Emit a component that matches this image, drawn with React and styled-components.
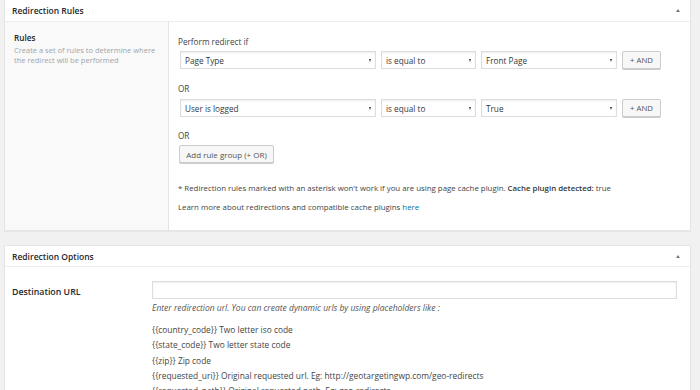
import React from "react";
import styled, { createGlobalStyle } from "styled-components";

const Global = createGlobalStyle`
  html, body { margin: 0; padding: 0; }
  body {
    background: #f1f1f1;
    font-family: "Open Sans", "Noto Sans", sans-serif;
    font-size: 8px;
    color: #444;
    width: 700px;
    height: 390px;
    overflow: hidden;
  }
  * { box-sizing: border-box; }
`;

const Page = styled.div`
  display: flex;
  flex-direction: column;
  gap: 14px;
  padding-left: 4px;
  width: 691px;
`;

const Panel = styled.section`
  background: #fff;
  border: 1px solid #e5e5e5;
  border-top: ${(p) => (p.$cut ? "none" : "1px solid #e5e5e5")};
  box-shadow: 0 1px 1px rgba(0, 0, 0, 0.04);
`;

const Header = styled.header`
  height: ${(p) => (p.$cut ? "22px" : "21px")};
  border-bottom: 1px solid #eee;
  display: flex;
  align-items: center;
  justify-content: space-between;
  padding: 0 10px 0 7px;
`;

const Title = styled.h2`
  margin: 0;
  font-size: 8.5px;
  font-weight: 600;
  color: #23282d;
`;

const Toggle = styled.span`
  width: 0;
  height: 0;
  border-left: 2.5px solid transparent;
  border-right: 2.5px solid transparent;
  border-bottom: 3px solid #72777c;
`;

const RulesBody = styled.div`
  display: grid;
  grid-template-columns: 164px 1fr;
  height: 208px;
`;

const Side = styled.div`
  background: #f9f9f9;
  border-right: 1px solid #e5e5e5;
  padding: 10px 9px;
`;

const SideTitle = styled.div`
  font-weight: 600;
  color: #23282d;
  font-size: 8.2px;
  margin-bottom: 2px;
`;

const SideDesc = styled.div`
  color: #a0a5aa;
  font-size: 7.5px;
  line-height: 10px;
`;

const Main = styled.div`
  padding: 15px 10px 0 9px;
  display: flex;
  flex-direction: column;
`;

const Label = styled.div`
  line-height: 10px;
  font-size: 8.2px;
  margin-bottom: ${(p) => p.$mb || 4}px;
  color: #444;
`;

const Row = styled.div`
  display: flex;
  align-items: center;
  padding-left: 2px;
  gap: 5px;
  margin-bottom: ${(p) => p.$mb || 0}px;
`;

const Select = styled.div`
  width: ${(p) => p.$w}px;
  height: 18px;
  border: 1px solid #ddd;
  box-shadow: inset 0 1px 2px rgba(0, 0, 0, 0.07);
  background: #fff;
  display: flex;
  align-items: center;
  justify-content: space-between;
  padding: 0 4px 0 4px;
  color: #32373c;
  font-size: 8.2px;
  &::after {
    content: "";
    width: 0;
    height: 0;
    border-left: 1.5px solid transparent;
    border-right: 1.5px solid transparent;
    border-top: 3px solid #32373c;
  }
`;

const Button = styled.button`
  font-family: inherit;
  font-size: ${(p) => p.$fs || 7.8}px;
  color: #555;
  background: #f7f7f7;
  border: 1px solid #ccc;
  border-radius: 2px;
  box-shadow: 0 1px 0 #ccc;
  height: 18px;
  padding: 0 ${(p) => p.$px || 6}px;
  margin: 0 0 0 ${(p) => p.$ml || 0}px;
  width: ${(p) => (p.$w ? p.$w + "px" : "auto")};
  align-self: flex-start;
`;

const Note = styled.p`
  margin: ${(p) => p.$mt || 0}px 0 ${(p) => p.$mb || 0}px;
  line-height: 10px;
  font-size: 7.85px;
  color: #444;
  white-space: nowrap;
  b { font-weight: 600; color: #32373c; }
  a { color: #0073aa; text-decoration: none; }
`;

const OptionsBody = styled.div`
  display: grid;
  grid-template-columns: 140px 1fr;
  padding: 14px 14px 0 7px;
  height: 140px;
`;

const FieldLabel = styled.div`
  font-weight: 600;
  color: #23282d;
  font-size: 8.8px;
  padding-top: 5px;
`;

const Field = styled.div`
  display: flex;
  flex-direction: column;
`;

const Input = styled.div`
  height: 18px;
  border: 1px solid #ddd;
  box-shadow: inset 0 1px 2px rgba(0, 0, 0, 0.07);
  background: #fff;
  width: 525px;
`;

const Help = styled.p`
  margin: 4px 0 9px;
  font-style: italic;
  font-size: 8.5px;
  color: #555;
  line-height: 10px;
  white-space: nowrap;
`;

const Placeholder = styled.div`
  font-size: 8.4px;
  color: #444;
  line-height: 15.3px;
  white-space: nowrap;
`;

export default function App() {
  const placeholders = [
    "{{country_code}} Two letter iso code",
    "{{state_code}} Two letter state code",
    "{{zip}} Zip code",
    "{{requested_uri}} Original requested url. Eg: http://geotargetingwp.com/geo-redirects",
    "{{requested_path}} Original requested path. Eg: geo-redirects",
  ];
  return (
    <>
      <Global />
      <Page>
        <Panel $cut>
          <Header $cut>
            <Title>Redirection Rules</Title>
            <Toggle />
          </Header>
          <RulesBody>
            <Side>
              <SideTitle>Rules</SideTitle>
              <SideDesc>
                Create a set of rules to determine where
                <br />
                the redirect will be performed
              </SideDesc>
            </Side>
            <Main>
              <Label $mb={4}>Perform redirect if</Label>
              <Row $mb={15}>
                <Select $w={196}>Page Type</Select>
                <Select $w={95}>is equal to</Select>
                <Select $w={136}>Front Page</Select>
                <Button $w={39} $px={0}>+ AND</Button>
              </Row>
              <Label $mb={5}>OR</Label>
              <Row $mb={14}>
                <Select $w={196}>User is logged</Select>
                <Select $w={95}>is equal to</Select>
                <Select $w={136}>True</Select>
                <Button $w={39} $px={0}>+ AND</Button>
              </Row>
              <Label $mb={4}>OR</Label>
              <Button $px={6} $ml={1} $w={95} $fs={8}>Add rule group (+ OR)</Button>
              <Note $mt={20} $mb={9}>
                * Redirection rules marked with an asterisk won't work if you are using page cache plugin.{" "}
                <b>Cache plugin detected:</b> true
              </Note>
              <Note>
                Learn more about redirections and compatible cache plugins <a href="#">here</a>
              </Note>
            </Main>
          </RulesBody>
        </Panel>
        <Panel>
          <Header>
            <Title>Redirection Options</Title>
            <Toggle />
          </Header>
          <OptionsBody>
            <FieldLabel>Destination URL</FieldLabel>
            <Field>
              <Input />
              <Help>Enter redirection url. You can create dynamic urls by using placeholders like :</Help>
              {placeholders.map((t) => (
                <Placeholder key={t}>{t}</Placeholder>
              ))}
            </Field>
          </OptionsBody>
        </Panel>
      </Page>
    </>
  );
}
